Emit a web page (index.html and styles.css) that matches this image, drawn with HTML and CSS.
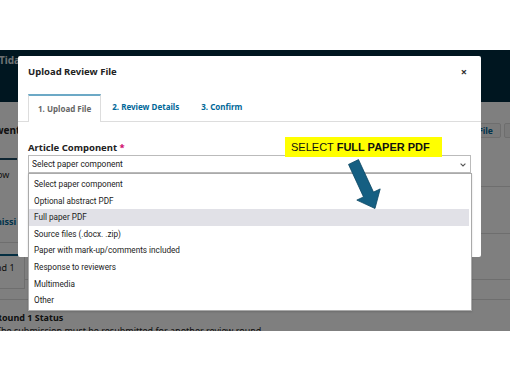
FILE: index.html
```html
<!DOCTYPE html>
<html lang="en">
<head>
    <meta charset="UTF-8">
    <meta name="viewport" content="width=device-width, initial-scale=1.0">
    <title>Upload Review File</title>
    <link rel="stylesheet" href="styles.css">
</head>
<body>
    <div class="shot">
        <!-- page behind the modal -->
        <div class="page">
            <header class="site-header">
                <span class="site-name">Tidal Journal</span>
            </header>

            <div class="title-row">
                <h2 class="sub-title">went</h2>
                <div class="actions">
                    <span class="btn">Upload File</span>
                    <span class="btn btn-cut">Library</span>
                </div>
            </div>

            <div class="work">
                <div class="side">
                    <div class="side-active"></div>
                    <div class="side-item">ow</div>
                    <div class="side-item side-link">nissi</div>
                    <div class="side-round">
                        <span>nd 1</span>
                    </div>
                </div>
                <div class="main">
                    <div class="main-row main-row-top"></div>
                    <div class="main-row"></div>
                    <div class="main-row main-row-short"></div>
                </div>
            </div>

            <div class="status">
                <h3 class="status-title">Round 1 Status</h3>
                <p class="status-text">The submission must be resubmitted for another review round.</p>
            </div>
        </div>

        <div class="overlay"></div>

        <div class="modal">
            <div class="modal-head">
                <h1 class="modal-title">Upload Review File</h1>
                <span class="close">×</span>
            </div>

            <ul class="tabs">
                <li class="tab active">1. Upload File</li>
                <li class="tab">2. Review Details</li>
                <li class="tab">3. Confirm</li>
            </ul>

            <div class="form">
                <label class="label">Article Component <span class="req">*</span></label>
                <div class="select">
                    <span>Select paper component</span>
                    <svg class="chevron" width="6" height="4" viewBox="0 0 6 4">
                        <path d="M0.6 0.7 L3 3 L5.4 0.7" fill="none" stroke="#555" stroke-width="1.1"/>
                    </svg>
                    <ul class="options">
                        <li>Select paper component</li>
                        <li>Optional abstract PDF</li>
                        <li class="hover">Full paper PDF</li>
                        <li>Source files (.docx. .zip)</li>
                        <li>Paper with mark-up/comments included</li>
                        <li>Response to reviewers</li>
                        <li>Multimedia</li>
                        <li>Other</li>
                    </ul>
                </div>
            </div>
        </div>

        <div class="callout">SELECT <b>FULL PAPER PDF</b></div>

        <svg class="arrow" width="510" height="281" viewBox="0 0 510 281">
            <polygon points="358.5,109.6 373.5,142.1 380.2,138.9 375,158.5 356.8,150.1 363.5,146.9 348.5,114.4"
                     fill="#155f82" stroke="#0d4763" stroke-width="0.8" stroke-linejoin="miter"/>
        </svg>
    </div>
</body>
</html>
```

FILE: styles.css
```css
* {
    margin: 0;
    padding: 0;
    box-sizing: border-box;
}

body {
    background: #fff;
    font-family: 'Noto Sans', sans-serif;
    color: #222;
}

.shot {
    position: relative;
    margin-top: 50px;
    height: 281px;
    overflow: hidden;
    background: #fff;
}

/* background page */

.site-header {
    height: 52px;
    background: #002c40;
    padding-top: 3px;
}

.site-name {
    display: block;
    margin-left: -1px;
    color: #dde3e6;
    font-size: 10px;
    font-weight: 700;
    white-space: nowrap;
}

.title-row {
    display: flex;
    align-items: center;
    height: 56px;
}

.sub-title {
    margin-left: -5px;
    font-size: 10px;
    font-weight: 700;
    color: #222;
}

.actions {
    display: flex;
    gap: 3px;
    margin-left: auto;
    margin-right: -40px;
}

.btn {
    padding: 0 7px;
    height: 15px;
    line-height: 14px;
    font-size: 8.5px;
    font-weight: 700;
    color: #006798;
    background: #f4f4f4;
    border: 1px solid #ddd;
    border-radius: 2px;
}

.work {
    display: grid;
    grid-template-columns: 25px 1fr;
}

.side {
    border-right: 1px solid #ddd;
}

.side-active {
    height: 2px;
    width: 17px;
    background: #1e4d66;
}

.side-item {
    height: 28px;
    line-height: 30px;
    font-size: 9px;
    margin-left: -3px;
    white-space: nowrap;
}

.side-item + .side-item {
    margin-top: 18px;
}

.side-link {
    color: #006798;
    font-weight: 700;
    margin-left: -4px;
    border-bottom: 1px solid #ddd;
    margin-right: -3px;
    height: 37px;
    line-height: 31px;
}

.side-round {
    margin-top: 11px;
    border-top: 2px solid #0b5f85;
    height: 35px;
    border-bottom: 1px solid #ddd;
    padding-top: 5px;
    font-size: 9px;
    white-space: nowrap;
    margin-left: -4px;
}

.main-row {
    border-bottom: 1px solid #ddd;
    height: 47px;
}

.main-row-top {
    height: 29px;
}

.main-row-short {
    height: 46px;
}

.status {
    border-top: 1px solid #ddd;
    margin-top: 10px;
    padding-top: 12px;
    margin-left: -4px;
}

.status-title {
    font-size: 9px;
    font-weight: 700;
    line-height: 12px;
}

.status-text {
    font-size: 9px;
    line-height: 13px;
    white-space: nowrap;
}

.overlay {
    position: absolute;
    inset: 0;
    background: rgba(0, 0, 0, 0.5);
}

/* modal */

.modal {
    position: absolute;
    left: 18px;
    top: 6px;
    width: 463px;
    height: 201px;
    background: #fff;
    border-radius: 2px;
    padding: 0 10px;
}

.modal-head {
    display: flex;
    align-items: center;
    justify-content: space-between;
    height: 30px;
}

.modal-title {
    font-size: 9.5px;
    font-weight: 700;
    color: #222;
}

.close {
    margin-right: 4px;
    font-size: 11px;
    font-weight: 700;
    color: #333;
}

.tabs {
    display: flex;
    list-style: none;
    margin: 8px -10px 0;
    padding: 0 10px;
    border-bottom: 1px solid #ddd;
}

.tab {
    padding: 0 11px;
    height: 27px;
    line-height: 26px;
    font-size: 8px;
    font-weight: 700;
    color: #006798;
    white-space: nowrap;
}

.tab.active {
    padding: 0 9px;
    color: #666;
    background: #fff;
    border: 1px solid #ddd;
    border-top: 2px solid #6ca9c6;
    border-bottom: none;
    margin-bottom: -1px;
    height: 28px;
}

.form {
    padding-top: 19px;
}

.label {
    display: block;
    font-size: 9.5px;
    font-weight: 700;
    line-height: 13px;
    color: #222;
}

.req {
    color: #d00a6c;
}

.select {
    position: relative;
    display: flex;
    align-items: center;
    justify-content: space-between;
    height: 18px;
    margin-top: 1px;
    padding: 0 4px 0 3px;
    border: 1px solid #bbb;
    font-family: Roboto, 'Noto Sans', sans-serif;
    font-size: 8.4px;
    color: #222;
}

.chevron {
    margin-top: 1px;
}

.options {
    position: absolute;
    left: -1px;
    top: 17px;
    width: 444px;
    list-style: none;
    padding: 2px 0 1px 0;
    background: #fff;
    border: 1px solid #aaa;
    box-shadow: 0 1px 2px rgba(0, 0, 0, 0.15);
}

.options li {
    height: 16.6px;
    line-height: 16.6px;
    margin-right: 2px;
    padding-left: 5px;
    font-size: 8.2px;
    color: #222;
}

.options li.hover {
    background: #e1e1e7;
}

/* annotation */

.callout {
    position: absolute;
    left: 285px;
    top: 87px;
    width: 157px;
    height: 20px;
    padding-left: 6px;
    line-height: 20px;
    background: #ffff00;
    font-family: 'Liberation Sans', Arial, sans-serif;
    font-size: 11px;
    color: #111;
    white-space: nowrap;
}

.callout b {
    font-weight: 700;
}

.arrow {
    position: absolute;
    left: 0;
    top: 0;
}
```
